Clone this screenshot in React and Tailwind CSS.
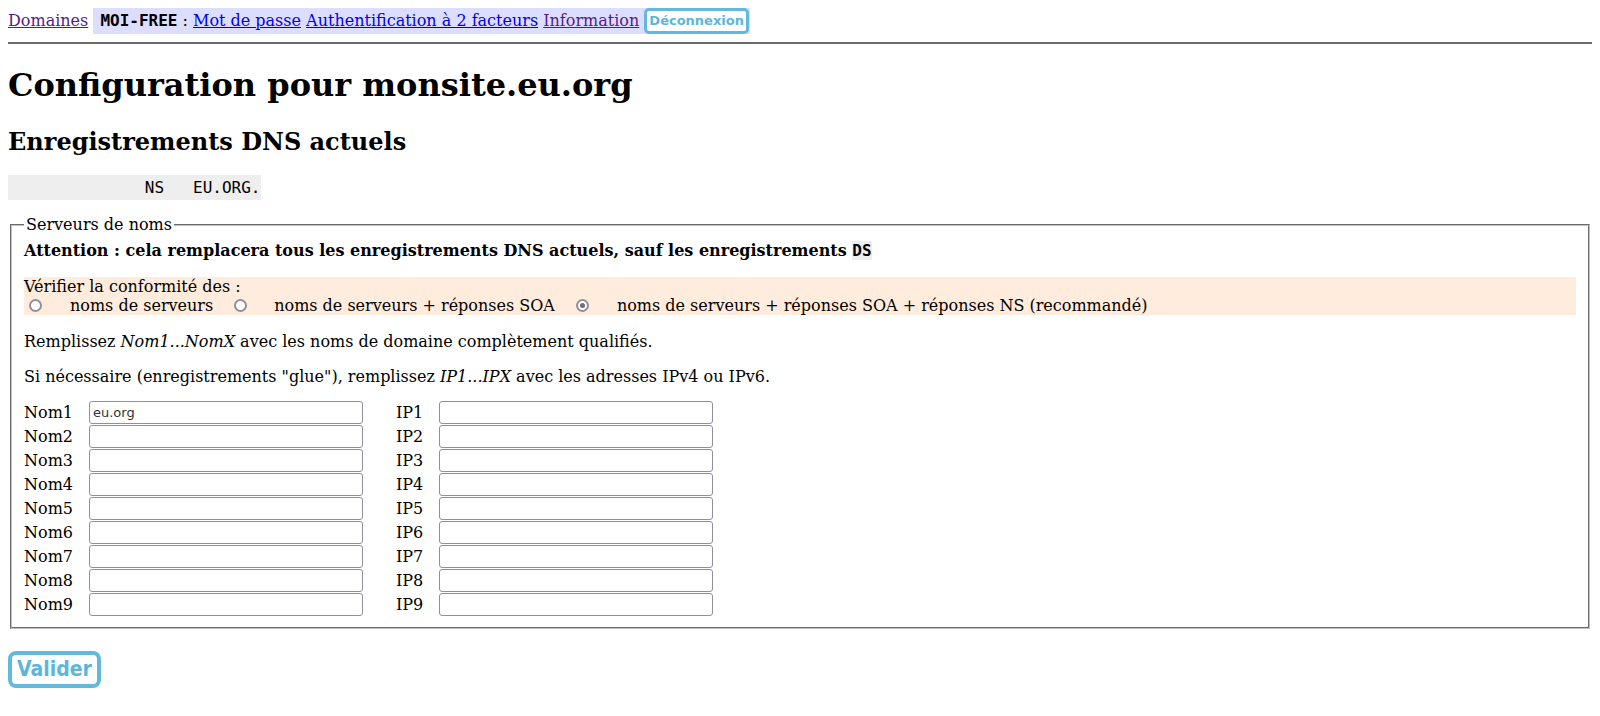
import React from "react";

const serif = "[font-family:'DejaVu_Serif',serif]";
const mono = "[font-family:'DejaVu_Sans_Mono',monospace]";
const sans = "[font-family:'DejaVu_Sans',sans-serif]";
const sansCond = "[font-family:'DejaVu_Sans_Condensed','DejaVu_Sans',sans-serif] [font-stretch:condensed]";

function Radio({ checked }) {
  return (
    <span className="ml-[5px] mr-[3px] inline-flex h-[13px] w-[13px] shrink-0 items-center justify-center rounded-full border-2 border-[#8f8f9d] bg-white">
      {checked && <span className="h-[5px] w-[5px] rounded-full bg-[#6f6f7a]" />}
    </span>
  );
}

function Field({ value }) {
  return (
    <div
      className={`h-[23px] w-[274px] rounded-[3px] border border-[#8f8f9d] bg-white px-[3px] text-[13px] leading-[21px] text-[#333] ${sans}`}
    >
      {value}
    </div>
  );
}

export default function App() {
  const rows = [1, 2, 3, 4, 5, 6, 7, 8, 9];
  return (
    <div className={`min-h-[716px] bg-white p-2 text-[16px] text-black ${serif}`}>
      {/* top navigation */}
      <div className="flex h-[26px] items-center whitespace-pre">
        <a href="#" className="text-[#551a8b] underline">Domaines</a>
        <span> </span>
        <span className="flex h-[26px] items-center bg-[#ddddff] pl-[7px]">
          <b className={`${mono} text-[16px]`}>MOI-FREE</b>
          <span> : </span>
          <a href="#" className="text-[#0000ee] underline">Mot de passe</a>
          <span> </span>
          <a href="#" className="text-[#0000ee] underline">Authentification à 2 facteurs</a>
          <span> </span>
          <a href="#" className="text-[#551a8b] underline">Information</a>
          <span> </span>
          <button
            className={`h-[26px] rounded-[5px] border-[3px] border-[#62b9dd] bg-white px-[2px] text-[13px] font-bold leading-[18px] text-[#5cb6dc] ${sans}`}
          >
            Déconnexion
          </button>
          <span className="w-[1px]" />
        </span>
      </div>

      <div className="mt-[8px] h-[2px] bg-[#6a6a6a]" />

      <h1 className="mt-[23px] text-[32px] font-bold leading-[37px]">Configuration pour monsite.eu.org</h1>
      <h2 className="mt-[24px] text-[24px] font-bold leading-[28px]">Enregistrements DNS actuels</h2>

      <div className={`mt-[19px] flex h-[25px] w-[253px] items-center whitespace-pre bg-[#eeeeee] pl-[2px] text-[16px] ${mono}`}>
        {"              NS   EU.ORG."}
      </div>

      <fieldset className="mx-[2px] mt-[15px] border-2 border-[#c0c0c0] px-[12px] pb-[10px] pt-[7px] [border-style:groove]">
        <legend className="px-[2px] leading-[19px]">Serveurs de noms</legend>

        <p className="font-bold leading-[19px]">
          Attention : cela remplacera tous les enregistrements DNS actuels, sauf les enregistrements{" "}
          <code className={`bg-[#eeeeee] text-[16px] ${mono}`}>DS</code>
        </p>

        <div className="mt-[17px] bg-[#ffecdc] leading-[19px]">
          <div>Vérifier la conformité des :</div>
          <div className="flex items-center">
            <Radio />
            <span className="ml-[25px]">noms de serveurs</span>
            <span className="ml-[16px] flex items-center">
              <Radio />
            </span>
            <span className="ml-[24px]">noms de serveurs + réponses SOA</span>
            <span className="ml-[16px] flex items-center">
              <Radio checked />
            </span>
            <span className="ml-[25px]">noms de serveurs + réponses SOA + réponses NS (recommandé)</span>
          </div>
        </div>

        <p className="mt-[17px] leading-[19px]">
          Remplissez <i>Nom1...NomX</i> avec les noms de domaine complètement qualifiés.
        </p>
        <p className="mt-[16px] leading-[19px]">
          Si nécessaire (enregistrements "glue"), remplissez <i>IP1...IPX</i> avec les adresses IPv4 ou IPv6.
        </p>

        <div className="mt-[14px] grid grid-cols-[65px_274px_33px_43px_274px] pt-[1px]">
          {rows.map((n) => (
            <React.Fragment key={n}>
              <div className="flex h-[24px] items-center">Nom{n}</div>
              <div className="flex h-[24px] items-start">
                <Field value={n === 1 ? "eu.org" : ""} />
              </div>
              <div />
              <div className="flex h-[24px] items-center">IP{n}</div>
              <div className="flex h-[24px] items-start">
                <Field value="" />
              </div>
            </React.Fragment>
          ))}
        </div>
      </fieldset>

      <button
        className={`mt-[22px] h-[37px] rounded-[8px] border-[4px] border-[#62b9dd] bg-white px-[5px] text-[21px] font-bold leading-[25px] text-[#5cb6dc] ${sansCond}`}
      >
        Valider
      </button>
    </div>
  );
}
